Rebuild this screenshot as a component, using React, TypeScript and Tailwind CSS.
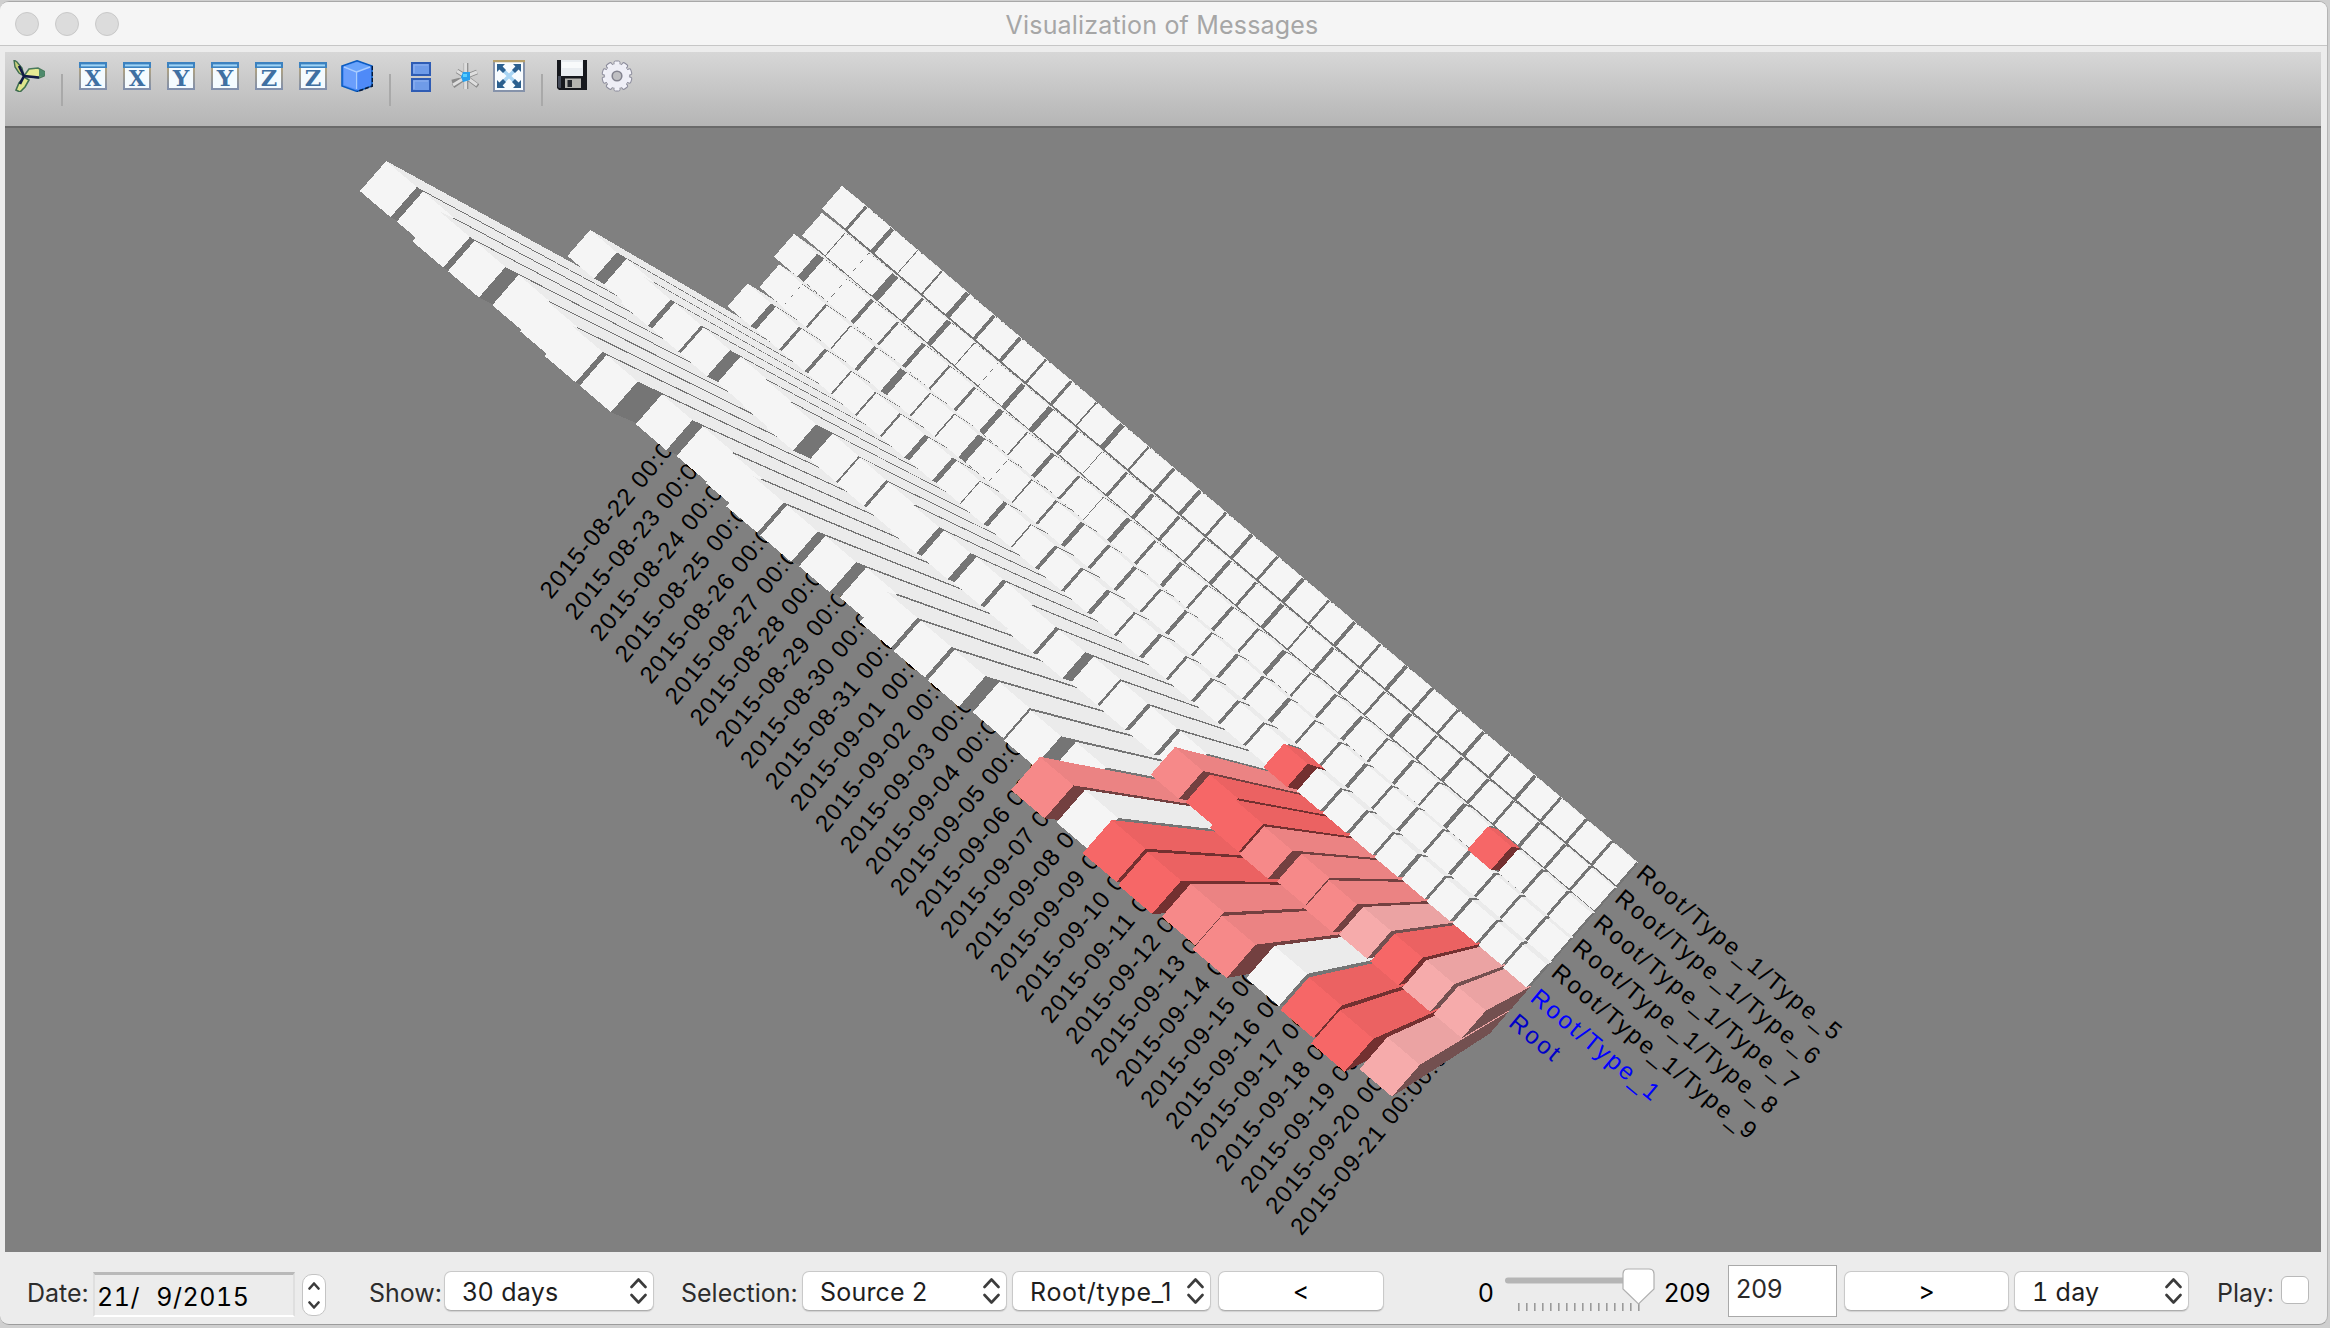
import React from "react";

/* ---------- chart data ---------- */

const DATES = [
  ...Array.from({ length: 10 }, (_, k) => `2015-08-${22 + k}`),
  ...Array.from({ length: 21 }, (_, k) => `2015-09-${String(k + 1).padStart(2, "0")}`),
];

type Tone = "w" | "l" | "m" | "r";
const TONES: Record<Tone, { top: string; side: string; dark: string }> = {
  w: { top: "#f5f5f5", side: "#ebebeb", dark: "#757575" },
  l: { top: "#f6abab", side: "#eba3a3", dark: "#735050" },
  m: { top: "#f68989", side: "#eb8383", dark: "#734040" },
  r: { top: "#f66767", side: "#eb6262", dark: "#733030" },
};

const ROOT = [
  1.353, 1.35, 1.3695, 1.368, 1.357, 1.364, 1.3756, 1.3748, 1.348, 1.339, 1.3454, 1.363, 1.3635, 1.357, 1.3464,
  1.369, 1.3695, 1.37, 1.351, 1.356, 1.332, 1.485, 1.467, 1.492, 1.497, 1.481, 1.499, 1.45, 1.4576, 1.479, 1.4335,
];
const TYPE1 = [
  1.171, 1.1637, 1.1767, 1.1754, 1.1764, 1.1674, 1.1727, 1.1797, 1.162, 1.1645, 1.1655, 1.1731, 1.17, 1.1648, 1.1639,
  1.175, 1.175, 1.165, 1.168, 1.1676, 1.1666, 1.2474, 1.239, 1.255, 1.2611, 1.2445, 1.257, 1.2468, 1.2464, 1.2443,
  1.2427,
];

/* Low rows are described by the visible gap after every bar. */
function fromGaps(mean: number, gaps: number[]) {
  const raw = [0];
  gaps.forEach((g, i) => raw.push(raw[i] - (1.3 * (g / 3 - 2.5)) / (1090 - 33 * i)));
  const n = raw.length;
  return raw.map((v, i) => {
    const a = Math.max(0, i - 4);
    const part = raw.slice(a, Math.min(n, i + 5));
    return mean + v - part.reduce((s, x) => s + x, 0) / part.length;
  });
}

const T5 = fromGaps(1.0255, [6, 10, 1, 3, 10, 6, 7, 4, 6, 2, 12, 4, 7, 9, 6, 8, 6, 9, 5, 8, 6, 9, 7, 6, 8, 6, 8, 6, 7, 6]);
const T6 = fromGaps(1.0235, [3, 0, 17, 7, 12, 2, 0, 11, 13, 6, 0, 7, 9, 7, 5, 9, 6, 10, 4, 8, 7, 6, 10, 6, 8, 7, 6, 8, 7, 6]);
const T7 = fromGaps(1.026, [20, 0, 9, 6, 10, 4, 6, 12, 2, 9, 5, 0, 10, 6, 9, 5, 8, 6, 11, 5, 7, 9, 6, 8, 5, 10, 7, 7, 7, 6]);
const T8 = fromGaps(1.0235, [1, 5, 2, 9, 17, 3, 2, 20, 0, 2, 5, 11, 6, 8, 6, 9, 5, 8, 7, 10, 5, 6, 9, 6, 8, 6, 9, 7, 6, 7]);
const T9 = fromGaps(1.03, [12, 5, 7, 3, 2, 3, 10, 10, 0, 10, 2, 8, 6, 10, 5, 9, 6, 8, 7, 6, 8, 6, 7, 8, 6, 9, 6, 8, 7, 6]);
T9[21] = 1.048;
T7[27] = 1.045;

const ROWS = [T5, T6, T7, T8, T9, TYPE1, ROOT];

function toneOf(row: number, i: number): Tone {
  if (row === 6 && i > 20) return "mwrrmmwrrl"[i - 21] as Tone;
  if (row === 5 && i > 20) return "mrrmmmlrll"[i - 21] as Tone;
  if ((row === 4 && i === 21) || (row === 2 && i === 27)) return "r";
  return "w";
}

/* ---------- projection ---------- */

const NADIR = [1715, 888];
function project(i: number, j: number, s: number) {
  const x = 862.5 + 25.12 * i - 21.6 * j;
  const y = 202.5 + 21.38 * i + 24.7 * j;
  return `${(NADIR[0] + (x - NADIR[0]) * s).toFixed(1)},${(NADIR[1] + (y - NADIR[1]) * s).toFixed(1)}`;
}

function Bar({ i, j, s, tone }: { i: number; j: number; s: number; tone: Tone }) {
  const c = TONES[tone];
  const i2 = i + 0.9;
  const j2 = j + 0.9;
  return (
    <g>
      <polygon fill={c.side} points={[project(i, j, 1), project(i2, j, 1), project(i2, j, s), project(i, j, s)].join(" ")} />
      <polygon fill={c.dark} points={[project(i2, j, 1), project(i2, j2, 1), project(i2, j2, s), project(i2, j, s)].join(" ")} />
      <polygon fill={c.top} points={[project(i, j, s), project(i2, j, s), project(i2, j2, s), project(i, j2, s)].join(" ")} />
    </g>
  );
}

const SERIES = [
  { t: "Root/Type_1/Type_5", x: 1635, y: 876, len: 258, fill: "#000" },
  { t: "Root/Type_1/Type_6", x: 1613.5, y: 900.5, len: 258, fill: "#000" },
  { t: "Root/Type_1/Type_7", x: 1592, y: 925.5, len: 258, fill: "#000" },
  { t: "Root/Type_1/Type_8", x: 1571, y: 950, len: 258, fill: "#000" },
  { t: "Root/Type_1/Type_9", x: 1550, y: 975, len: 258, fill: "#000" },
  { t: "Root/Type_1", x: 1529, y: 1000, len: 159, fill: "#0000ff" },
  { t: "Root", x: 1507.5, y: 1025, len: 58, fill: "#0000c8" },
];

function Chart() {
  const bars: React.ReactNode[] = [];
  for (let j = 6; j >= 0; j--)
    ROWS[j].forEach((s, i) => bars.push(<Bar key={`${j}-${i}`} i={i} j={j} s={s} tone={toneOf(j, i)} />));
  return (
    <svg viewBox="5 128 2316 1124" className="block h-[1124px] w-[2316px]" fontFamily='"Liberation Sans", Arial, sans-serif' fontSize="24">
      <rect x="5" y="128" width="2316" height="1124" fill="#808080" />
      {DATES.map((d, i) => (
        <text key={d} textLength="245" transform={`translate(${551 + 25.02 * i} ${600 + 21.22 * i}) rotate(-50.5)`}>
          {d} 00:00:00
        </text>
      ))}
      {SERIES.map((l) => (
        <text key={l.t} textLength={l.len} fill={l.fill} transform={`translate(${l.x} ${l.y}) rotate(39.8)`}>
          {l.t}
        </text>
      ))}
      <g shapeRendering="crispEdges">
        <polygon fill="#757575" points={[project(0, 0, 1), project(30.9, 0, 1), project(30.9, 6.9, 1), project(0, 6.9, 1)].join(" ")} />
        {bars}
      </g>
    </svg>
  );
}

/* ---------- toolbar icons ---------- */

function AxisIcon({ letter, id }: { letter: string; id: string }) {
  return (
    <svg viewBox="0 0 28 28" className="mt-[10px] mr-4 h-7 w-7 shrink-0 overflow-visible">
      <defs>
        <linearGradient id={id} x1="0" y1="0" x2="0" y2="1">
          <stop offset="0" stopColor="#bfa873" />
          <stop offset="1" stopColor="#7f8fae" />
        </linearGradient>
      </defs>
      <rect width="28" height="28" fill={`url(#${id})`} />
      <rect x="2" y="4" width="24" height="22" fill="#f4fbff" />
      <rect width="28" height="6" fill="#3c82c0" />
      <rect x="2" y="2.4" width="24" height="2" fill="#9fd4f6" />
      <text x="14" y="24.2" textAnchor="middle" fontFamily='"DejaVu Serif", "Liberation Serif", serif' fontWeight="700" fontSize="21.5" textLength="16.5" lengthAdjust="spacingAndGlyphs" fill="#3f70a2">
        {letter}
      </text>
    </svg>
  );
}

function TriadIcon() {
  return (
    <svg viewBox="0 0 32 32" className="mt-2 ml-[8px] h-8 w-8 shrink-0">
      <path d="M1 0L4 2L9 8L11 16L6 13L2 7Z" fill="#c9cf7a" stroke="#3f6f50" strokeWidth="1.4" />
      <path d="M11 16L16 9L25 8L32 12L31 16L26 18Z" fill="#e6ea94" stroke="#4a7a5c" strokeWidth="1.6" />
      <path d="M26 9L32 12L31 16L26 17Z" fill="#4e8a6c" />
      <path d="M11 17L16 20L12 27L7 32L3 30L6 23Z" fill="#dfe58c" stroke="#3f6f50" strokeWidth="1.6" />
      <path d="M6 6L11 16L26 17.5M11 16L7 24" fill="none" stroke="#101a44" strokeWidth="2.6" />
    </svg>
  );
}

function CubeIcon() {
  return (
    <svg viewBox="0 0 32 32" className="mt-2 h-8 w-8 shrink-0">
      <path d="M16 0.8L31 6V26L16 31.4L1 26V6Z" fill="#4f8df8" stroke="#0b5cc0" strokeWidth="1.6" />
      <path d="M31.5 6V26L16 31.6" fill="none" stroke="#0a1a38" strokeWidth="1.6" strokeDasharray="4 2" />
      <path d="M16 2L29 6.5L16 11.5L3 6.5Z" fill="#6aa4fb" />
      <path d="M3 8L14.5 12.5V29L3 25Z" fill="#6a9efc" />
      <path d="M17 12.5L29 8V25L17 29Z" fill="#4f8af8" />
      <path d="M3 7L15.5 12V29M15.5 12L29 7" fill="none" stroke="#a9ccff" strokeWidth="1.4" />
    </svg>
  );
}

function StackIcon() {
  return (
    <svg viewBox="0 0 20 30" className="mt-[10px] ml-[20px] h-[30px] w-5 shrink-0">
      <rect x="1" y="1" width="18" height="12" fill="#6f9be8" stroke="#2f5cb4" strokeWidth="2" />
      <rect x="1" y="17" width="18" height="12" fill="#6f9be8" stroke="#2f5cb4" strokeWidth="2" />
      <path d="M3 11V3H17M3 27V19H17" fill="none" stroke="#8fb2f0" strokeWidth="1.2" />
    </svg>
  );
}

function AxesIcon() {
  return (
    <svg viewBox="0 0 28 28" className="mt-[10px] ml-[20px] h-7 w-7 shrink-0">
      <path d="M15 1V27M15 15L2 24M1 20L9 18M15 15L27 24M16 14L26 10M14 14L6 9" fill="none" stroke="#8a8a8a" strokeWidth="4.6" />
      <path d="M14.6 1V27M15 15L2 23M15 15L26 23M16 14L26 10M14 14L6 9" fill="none" stroke="#dedede" strokeWidth="3" />
      <path d="M12 10L19 10L19 18L12 20L10 15Z" fill="#27a0ee" />
      <path d="M12 12h4v3h-4z" fill="#58d0ff" />
    </svg>
  );
}

function FitIcon() {
  return (
    <svg viewBox="0 0 32 32" className="mt-2 ml-[14px] h-8 w-8 shrink-0">
      <rect x="1" y="1" width="30" height="30" fill="#f8fcff" stroke="#8592aa" strokeWidth="2" />
      <path d="M0 1H32" stroke="#b7a06b" strokeWidth="2.4" />
      <path d="M9 9L23 23M23 9L9 23" stroke="#a9d5f4" strokeWidth="3.4" />
      <g fill="#2c608f">
        <path d="M4 4H12L9.6 6.4L13 10L10 13L6.4 9.6L4 12Z" />
        <path d="M28 4H20L22.4 6.4L19 10L22 13L25.6 9.6L28 12Z" />
        <path d="M4 28H12L9.6 25.6L13 22L10 19L6.4 22.4L4 20Z" />
        <path d="M28 28H20L22.4 25.6L19 22L22 19L25.6 22.4L28 20Z" />
      </g>
    </svg>
  );
}

function SaveIcon() {
  return (
    <svg viewBox="0 0 30 30" className="mt-2 ml-[14px] h-[30px] w-[30px] shrink-0">
      <path d="M0 0H30V30H2L0 28Z" fill="#16181d" />
      <path d="M1 16H4V28H2L1 27Z" fill="#444a58" />
      <rect x="4" y="0" width="22" height="16" fill="#e9edf1" />
      <path d="M5 2H25V8H5Z" fill="#f8fafb" />
      <rect x="8" y="18.500" width="16" height="9.500" fill="#b4b4b0" />
      <rect x="10.500" y="20" width="4.500" height="7" fill="#23262c" />
    </svg>
  );
}

function GearIcon() {
  return (
    <svg viewBox="-16 -16 32 32" className="mt-2 ml-[14px] h-8 w-8 shrink-0">
      <g stroke="#8a8a9a" strokeWidth="1">
        {[0, 36, 72, 108, 144].map((a) => (
          <rect key={a} x="-3" y="-15" width="6" height="30" rx="1.500" fill="#f1f1f8" transform={`rotate(${a})`} />
        ))}
      </g>
      <circle r="8.500" fill="none" stroke="#eeeef6" strokeWidth="7" />
      <circle r="4.800" fill="#bfbfc2" stroke="#83838f" strokeWidth="1.600" />
    </svg>
  );
}

const Separator = ({ className }: { className: string }) => <div className={`mt-[22px] h-8 w-0.5 shrink-0 bg-[#a9a9a9] ${className}`} />;

/* ---------- controls ---------- */

function UpDown({ className, w, h, gap }: { className: string; w: number; h: number; gap: number }) {
  const total = h * 2 + gap;
  return (
    <svg width={w + 3} height={total + 3} viewBox={`-1.5 -1.5 ${w + 3} ${total + 3}`} className={className}>
      <path
        d={`M0 ${h}L${w / 2} 0L${w} ${h}M0 ${h + gap}L${w / 2} ${total}L${w} ${h + gap}`}
        fill="none"
        stroke="#3c3c3c"
        strokeWidth="2.6"
        strokeLinecap="round"
        strokeLinejoin="round"
      />
    </svg>
  );
}

const BOX = "mt-[19px] flex h-[40px] shrink-0 items-center rounded-[7px] border border-[#c9c9c9] border-b-[#adadad] bg-white shadow-[0_1px_1px_rgba(0,0,0,0.12)]";

function Select({ className, text, textClass }: { className: string; text: string; textClass: string }) {
  return (
    <div className={`${BOX} justify-between pr-[6px] pl-[17px] ${className}`}>
      <span className={`mt-px whitespace-pre text-[#1e1e1e] ${textClass}`}>{text}</span>
      <UpDown className="shrink-0" w={14} h={7.5} gap={8} />
    </div>
  );
}

export default function App() {
  return (
    <div className="h-[1328px] w-[2330px] overflow-hidden bg-[#cfcfcf] font-['Inter',sans-serif] text-[25px] leading-[30px]">
      <div className="mt-px flex h-[1324px] w-[2328px] flex-col overflow-hidden rounded-[9px] border-t border-r border-b border-t-[#a8a8a8] border-r-[#b4b4b4] border-b-[#9c9c9c] bg-[#ececec]">
        <header className="flex h-[44px] shrink-0 items-center border-b border-[#c6c6c6] bg-[#f5f5f5] pl-[15px]">
          <div className="flex w-[92px] gap-4">
            <i className="h-6 w-6 shrink-0 rounded-full border border-[#c9c9c9] bg-[#dcdcdc]" />
            <i className="h-6 w-6 shrink-0 rounded-full border border-[#c9c9c9] bg-[#dcdcdc]" />
            <i className="h-6 w-6 shrink-0 rounded-full border border-[#c9c9c9] bg-[#dcdcdc]" />
          </div>
          <div className="mt-0.5 flex-1 pr-[110px] text-center text-[25px] tracking-[0.18px] text-[#a6a6a6]">Visualization of Messages</div>
        </header>

        <div className="mt-[6px] ml-[5px] flex h-[76px] w-[2316px] shrink-0 items-start border-b-2 border-[#696969] bg-linear-to-b from-[#d7d7d7] to-[#b5b5b5]">
          <TriadIcon />
          <Separator className="mr-4 ml-[16px]" />
          {["X", "X", "Y", "Y", "Z", "Z"].map((l, k) => (
            <AxisIcon key={k} letter={l} id={`axis-${k}`} />
          ))}
          <div className="-ml-0.5 flex items-start">
            <CubeIcon />
            <Separator className="ml-[16px]" />
            <StackIcon />
            <AxesIcon />
            <FitIcon />
            <Separator className="ml-[16px]" />
            <SaveIcon />
            <GearIcon />
          </div>
        </div>

        <main className="ml-[5px] h-[1124px] w-[2316px] shrink-0">
          <Chart />
        </main>

        <footer className="flex items-start pl-[27px] text-black">
          <span className="mt-[26px] w-[66px] shrink-0 text-[#2c2c2c]">Date:</span>
          <div className="mt-[20px] h-[45px] w-[202px] shrink-0 border-2 border-t-[3px] border-[#dfdfdf] border-t-[#b9b9b9] border-b-white pt-[7px] pl-[2px] text-[25px] tracking-[0.5px] whitespace-pre tabular-nums [word-spacing:1px]">21/  9/2015</div>
          <div className="mt-[22px] ml-[7px] flex h-[42px] w-[24px] shrink-0 items-center justify-center rounded-[10px] border border-[#c4c4c4] bg-white">
            <UpDown className="" w={9} h={5} gap={14} />
          </div>
          <span className="mt-[26px] ml-[43px] w-[75px] shrink-0 text-[#2c2c2c]">Show:</span>
          <Select className="w-[210px]" text="30 days" textClass="tracking-[0.3px]" />
          <span className="mt-[26px] ml-[27px] w-[121px] shrink-0 text-[#2c2c2c]">Selection:</span>
          <Select className="w-[205px]" text="Source 2" textClass="tracking-[0.2px]" />
          <Select className="ml-[5px] w-[199px]" text="Root/type_1" textClass="tracking-[0.7px]" />
          <div className={`${BOX} ml-[7px] w-[166px] justify-center`}>&lt;</div>
          <span className="mt-[26px] ml-[94px] w-[26px] shrink-0">0</span>
          <svg viewBox="0 0 152 46" className="mt-[15px] h-[46px] w-[152px] shrink-0">
            <rect x="1" y="10.500" width="135" height="6" rx="3" fill="#b5b5b5" />
            {Array.from({ length: 16 }, (_, k) => (
              <rect key={k} x={14 + k * 8} y="36" width="1.600" height="8" fill="#9a9a9a" />
            ))}
            <path d="M124 2H145Q150 2 150 7V22L134.500 37L119 22V7Q119 2 124 2Z" fill="#fff" stroke="#b0b0b0" strokeWidth="1.200" />
          </svg>
          <span className="mt-[26px] ml-[8px] w-[64px] shrink-0">209</span>
          <div className="mt-[13px] h-[52px] w-[109px] shrink-0 border border-[#a9a9a9] bg-white pt-[8px] pl-[7px] text-[#2a2a2a]">209</div>
          <div className={`${BOX} ml-[7px] w-[165px] justify-center`}>&gt;</div>
          <Select className="ml-[5px] w-[175px]" text="1 day" textClass="tracking-[0.3px] tabular-nums" />
          <span className="mt-[26px] ml-[28px] w-[64px] shrink-0 text-[#2c2c2c]">Play:</span>
          <div className="mt-[24px] h-[28px] w-[28px] shrink-0 rounded-[6px] border border-[#b9b9b9] bg-white" />
        </footer>
      </div>
    </div>
  );
}
